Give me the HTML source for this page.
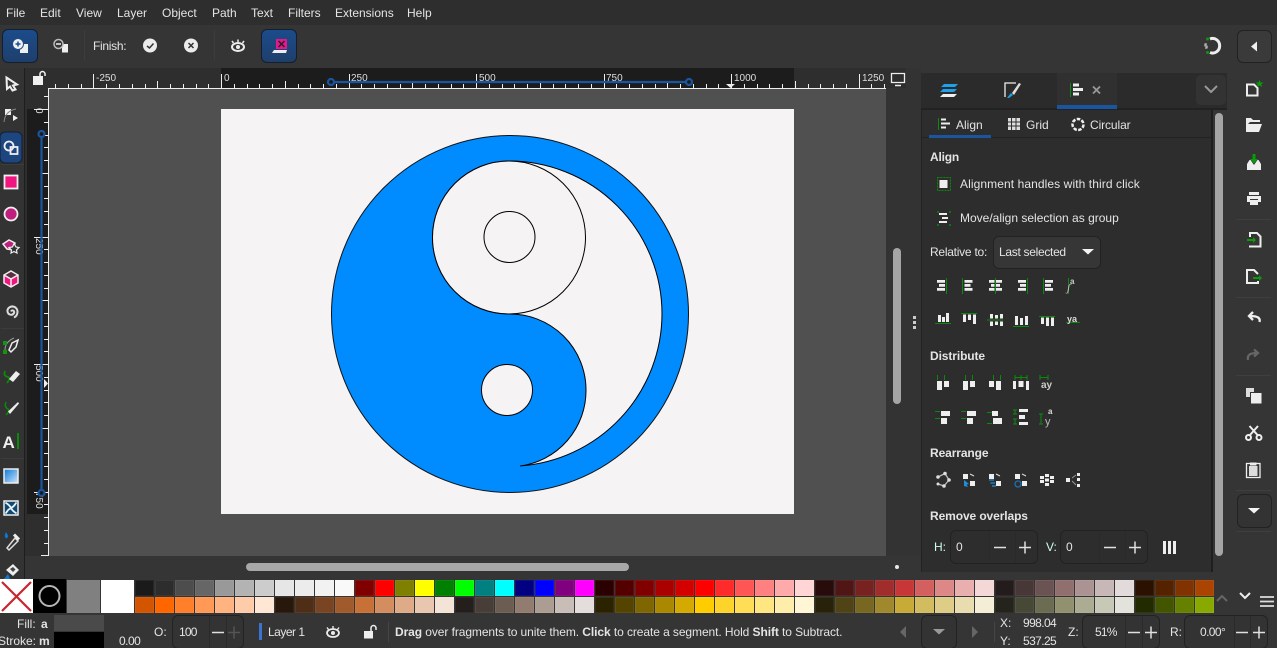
<!DOCTYPE html>
<html><head><meta charset="utf-8"><style>
html,body{margin:0;padding:0;width:1277px;height:648px;overflow:hidden;background:#353535}
body{position:relative;font:12px/14px "Liberation Sans",sans-serif;color:#e4e4e4}
.b{position:absolute}
.t{position:absolute;white-space:nowrap;line-height:14px}
.h{font-weight:bold}
.box{position:absolute;border:1px solid #222;border-radius:6px;box-sizing:border-box;background:#333}
.blue{position:absolute;box-sizing:border-box;border:1px solid #141e2c;border-radius:6px;background:linear-gradient(#1c4c8c,#1e3f6c)}
.r{font-size:10px;color:#ddd;line-height:10px}
.v{font-size:10px;line-height:10px;color:#ddd;writing-mode:vertical-rl;position:absolute;white-space:nowrap}
.p{position:absolute;left:135px;height:16px;display:flex;gap:1px}
.p i{display:block;width:19px;height:16px;box-shadow:inset 0 0 0 1px rgba(255,255,255,.06)}
svg{position:absolute;left:0;top:0}
</style></head><body>
<div class="b" style="left:0;top:0;width:1277px;height:25px;background:#2e2e2e"></div>
<div class="b" style="left:0;top:25px;width:1277px;height:43px;background:#353535"></div>
<span class="t" style="left:6px;top:6px">File</span>
<span class="t" style="left:40px;top:6px">Edit</span>
<span class="t" style="left:76px;top:6px">View</span>
<span class="t" style="left:117px;top:6px">Layer</span>
<span class="t" style="left:162px;top:6px">Object</span>
<span class="t" style="left:212px;top:6px">Path</span>
<span class="t" style="left:251px;top:6px">Text</span>
<span class="t" style="left:288px;top:6px">Filters</span>
<span class="t" style="left:335px;top:6px">Extensions</span>
<span class="t" style="left:407px;top:6px">Help</span>
<div class="blue" style="left:2px;top:29px;width:36px;height:34px"></div>
<div class="blue" style="left:261px;top:29px;width:36px;height:34px"></div>
<span class="t" style="left:93px;top:39px;letter-spacing:-.3px">Finish:</span>
<div class="box" style="left:1237px;top:30px;width:35px;height:33px;background:#3a3a3a"></div>

<div class="b" style="left:0;top:68px;width:24px;height:512px;background:#333"></div>
<div class="b" style="left:24px;top:68px;width:1px;height:512px;background:#1e1e1e"></div>
<div class="b" style="left:25px;top:68px;width:24px;height:490px;background:#2e2e2e"></div>
<div class="b" style="left:27px;top:109px;width:21px;height:405px;background:#1c1c1c"></div>
<div class="b" style="left:49px;top:68px;width:837px;height:20px;background:#2e2e2e"></div>
<div class="b" style="left:221px;top:68px;width:573px;height:20px;background:#1c1c1c"></div>
<div class="b" style="left:49px;top:89px;width:837px;height:467px;background:#505050"></div>
<div class="b" style="left:221px;top:109px;width:573px;height:405px;background:#f5f3f4"></div>
<div class="b" style="left:886px;top:68px;width:35px;height:512px;background:#333"></div>
<div class="b" style="left:886px;top:68px;width:20px;height:20px;background:#2e2e2e"></div>
<div class="b" style="left:25px;top:556px;width:896px;height:23px;background:#353535"></div>
<div class="b" style="left:893px;top:248px;width:8px;height:156px;border-radius:4px;background:#a5a5a5"></div>
<div class="b" style="left:246px;top:563px;width:383px;height:8px;border-radius:4px;background:#a8a8a8"></div>
<div class="b" style="left:895px;top:565px;width:4px;height:4px;border-radius:2px;background:#e8e8e8"></div>
<div class="b" style="left:913px;top:316px;width:3px;height:3px;background:#ccc"></div>
<div class="b" style="left:913px;top:321px;width:3px;height:3px;background:#ccc"></div>
<div class="b" style="left:913px;top:326px;width:3px;height:3px;background:#ccc"></div>

<span class="t r" style="left:96px;top:74px">-250</span>
<span class="t r" style="left:224px;top:74px">0</span>
<span class="t r" style="left:351px;top:74px">250</span>
<span class="t r" style="left:479px;top:74px">500</span>
<span class="t r" style="left:606px;top:74px">750</span>
<span class="t r" style="left:734px;top:74px">1000</span>
<span class="t r" style="left:862px;top:74px">1250</span>
<span class="v" style="left:33px;top:108px">0</span>
<span class="v" style="left:33px;top:238px">250</span>
<span class="v" style="left:33px;top:365px">500</span>
<span class="v" style="left:33px;top:492px">750</span>

<!-- panel -->
<div class="b" style="left:921px;top:73px;width:306px;height:37px;background:#2b2b2b"></div>
<div class="b" style="left:1057px;top:73px;width:60px;height:36px;background:#303030"></div>
<div class="b" style="left:1057px;top:105px;width:60px;height:4px;background:#1a559f"></div>
<div class="b" style="left:921px;top:108px;width:306px;height:2px;background:#222"></div>
<div class="b" style="left:1057px;top:105px;width:60px;height:4px;background:#1a559f"></div>
<div class="b" style="left:1196px;top:75px;width:30px;height:30px;border-radius:5px;background:#333"></div>
<div class="b" style="left:921px;top:110px;width:290px;height:462px;background:#2d2d2d"></div>
<div class="b" style="left:921px;top:110px;width:1px;height:462px;background:#222"></div>
<div class="b" style="left:1211px;top:110px;width:2px;height:462px;background:#1f1f1f"></div>
<div class="b" style="left:922px;top:137px;width:289px;height:1px;background:#222"></div>
<div class="b" style="left:929px;top:135px;width:62px;height:3px;background:#1a559f"></div>
<div class="b" style="left:1215px;top:113px;width:8px;height:443px;border-radius:4px;background:#a5a5a5"></div>
<span class="t" style="left:956px;top:118px">Align</span>
<span class="t" style="left:1026px;top:118px">Grid</span>
<span class="t" style="left:1090px;top:118px;letter-spacing:-.1px">Circular</span>
<span class="t h" style="left:930px;top:150px;letter-spacing:-.2px">Align</span>
<span class="t" style="left:960px;top:177px;letter-spacing:.09px">Alignment handles with third click</span>
<span class="t" style="left:960px;top:211px">Move/align selection as group</span>
<span class="t" style="left:930px;top:245px;letter-spacing:-.25px">Relative to:</span>
<div class="box" style="left:993px;top:236px;width:108px;height:33px;background:#363636"></div>
<span class="t" style="left:999px;top:245px;letter-spacing:-.3px">Last selected</span>
<span class="t h" style="left:930px;top:349px;letter-spacing:-.1px">Distribute</span>
<span class="t h" style="left:930px;top:446px;letter-spacing:-.1px">Rearrange</span>
<span class="t h" style="left:930px;top:509px;letter-spacing:-.1px">Remove overlaps</span>
<span class="t" style="left:934px;top:540px;color:#cfe">H:</span>
<div class="box" style="left:950px;top:530px;width:88px;height:34px;background:#2d2d2d"></div>
<span class="t" style="left:956px;top:540px">0</span>
<span class="t" style="left:1046px;top:540px;color:#cfe">V:</span>
<div class="box" style="left:1060px;top:530px;width:88px;height:34px;background:#2d2d2d"></div>
<span class="t" style="left:1066px;top:540px">0</span>

<!-- palette -->
<div class="b" style="left:0;top:579px;width:33px;height:34px;background:#fff"></div>
<div class="b" style="left:33px;top:579px;width:33px;height:34px;background:#000"></div>
<div class="b" style="left:67px;top:580px;width:33px;height:33px;background:#808080"></div>
<div class="b" style="left:101px;top:580px;width:33px;height:33px;background:#fff"></div>
<div class="p" style="top:580px">
<i style="background:#1a1a1a"></i><i style="background:#2d2d2d"></i><i style="background:#4d4d4d"></i><i style="background:#666"></i><i style="background:#999"></i><i style="background:#b3b3b3"></i><i style="background:#ccc"></i><i style="background:#e6e6e6"></i><i style="background:#ececec"></i><i style="background:#f2f2f2"></i><i style="background:#f9f9f9"></i>
<i style="background:#800000"></i><i style="background:#f00"></i><i style="background:#808000"></i><i style="background:#ff0"></i><i style="background:#008000"></i><i style="background:#0f0"></i><i style="background:#008080"></i><i style="background:#0ff"></i><i style="background:#000080"></i><i style="background:#00f"></i><i style="background:#800080"></i><i style="background:#f0f"></i>
<i style="background:#2b0000"></i><i style="background:#500"></i><i style="background:#800000"></i><i style="background:#a00"></i><i style="background:#d40000"></i><i style="background:#f00"></i><i style="background:#ff2a2a"></i><i style="background:#f55"></i><i style="background:#ff8080"></i><i style="background:#faa"></i><i style="background:#ffd5d5"></i>
<i style="background:#280b0b"></i><i style="background:#501616"></i><i style="background:#782121"></i><i style="background:#a02c2c"></i><i style="background:#c83737"></i><i style="background:#d35f5f"></i><i style="background:#de8787"></i><i style="background:#e9afaf"></i><i style="background:#f4d7d7"></i>
<i style="background:#241c1c"></i><i style="background:#483737"></i><i style="background:#6c5353"></i><i style="background:#916f6f"></i><i style="background:#ac9393"></i><i style="background:#c8b7b7"></i><i style="background:#e3dbdb"></i>
<i style="background:#2b1100"></i><i style="background:#520"></i><i style="background:#803300"></i><i style="background:#a40"></i>
</div>
<div class="p" style="top:597px">
<i style="background:#d45500"></i><i style="background:#f60"></i><i style="background:#ff7f2a"></i><i style="background:#f95"></i><i style="background:#ffb380"></i><i style="background:#fca"></i><i style="background:#ffe6d5"></i>
<i style="background:#28170b"></i><i style="background:#502d16"></i><i style="background:#784421"></i><i style="background:#a05a2c"></i><i style="background:#c87137"></i><i style="background:#d38d5f"></i><i style="background:#deaa87"></i><i style="background:#e9c6af"></i><i style="background:#f4e3d7"></i>
<i style="background:#241f1c"></i><i style="background:#483e37"></i><i style="background:#6c5d53"></i><i style="background:#917c6f"></i><i style="background:#ac9d93"></i><i style="background:#c8beb7"></i><i style="background:#e3dedb"></i>
<i style="background:#2b2200"></i><i style="background:#540"></i><i style="background:#806600"></i><i style="background:#a80"></i><i style="background:#d4aa00"></i><i style="background:#fc0"></i><i style="background:#ffd42a"></i><i style="background:#fd5"></i><i style="background:#ffe680"></i><i style="background:#fea"></i><i style="background:#fff6d5"></i>
<i style="background:#28220b"></i><i style="background:#504416"></i><i style="background:#786721"></i><i style="background:#a0892c"></i><i style="background:#c8ab37"></i><i style="background:#d3bc5f"></i><i style="background:#decd87"></i><i style="background:#e9ddaf"></i><i style="background:#f4eed7"></i>
<i style="background:#24241c"></i><i style="background:#484837"></i><i style="background:#6c6c53"></i><i style="background:#91916f"></i><i style="background:#acac93"></i><i style="background:#c8c8b7"></i><i style="background:#e3e3db"></i>
<i style="background:#222b00"></i><i style="background:#450"></i><i style="background:#668000"></i><i style="background:#8a0"></i>
</div>

<!-- status -->
<span class="t" style="left:17px;top:617px">Fill:</span>
<span class="t h" style="left:41px;top:617px">a</span>
<span class="t" style="left:-2px;top:634px">Stroke:</span>
<span class="t h" style="left:39px;top:634px">m</span>
<div class="b" style="left:54px;top:615px;width:50px;height:16px;background:#4a4a4a"></div>
<div class="b" style="left:54px;top:632px;width:50px;height:16px;background:#000"></div>
<span class="t" style="left:119px;top:634px;letter-spacing:-.5px">0.00</span>
<span class="t" style="left:154px;top:625px">O:</span>
<div class="box" style="left:172px;top:615px;width:72px;height:34px"></div>
<span class="t" style="left:179px;top:625px;letter-spacing:-.8px">100</span>
<div class="b" style="left:259px;top:623px;width:3px;height:17px;background:#3a74cf"></div>
<span class="t" style="left:268px;top:625px;letter-spacing:-.5px">Layer 1</span>
<span class="t" style="left:395px;top:625px;white-space:pre;letter-spacing:-.08px"><b>Drag</b> over fragments to unite them. <b>Click</b> to create a segment. Hold <b>Shift</b> to Subtract.</span>
<div class="box" style="left:921px;top:615px;width:36px;height:34px"></div>
<span class="t" style="left:1000px;top:616px">X:</span>
<span class="t" style="left:1000px;top:634px">Y:</span>
<span class="t" style="left:1023px;top:616px;letter-spacing:-.6px">998.04</span>
<span class="t" style="left:1023px;top:634px;letter-spacing:-.6px">537.25</span>
<span class="t" style="left:1068px;top:625px">Z:</span>
<div class="box" style="left:1082px;top:615px;width:78px;height:34px"></div>
<span class="t" style="left:1095px;top:625px;letter-spacing:-.8px">51%</span>
<span class="t" style="left:1170px;top:625px">R:</span>
<div class="box" style="left:1184px;top:615px;width:84px;height:34px"></div>
<span class="t" style="left:1200px;top:625px;letter-spacing:-.6px">0.00°</span>
<div class="b" style="left:1227px;top:68px;width:50px;height:512px;background:#353535"></div>
<div class="box" style="left:1237px;top:494px;width:35px;height:34px;background:#333"></div>

<svg width="1277" height="648" viewBox="0 0 1277 648">
<!-- artwork -->
<circle cx="510" cy="314" r="178.500" fill="#008cff" stroke="#111" stroke-width="1"/>
<path d="M509 161A153 153 0 0 1 662 314A153 153 0 0 1 520 466A76 76 0 0 0 586 390A76 76 0 0 0 509 314A76.500 76.500 0 0 1 509 161Z" fill="#f5f3f4" stroke="#000" stroke-width="1"/>
<circle cx="509" cy="237.500" r="76.500" fill="#f5f3f4" stroke="#000" stroke-width="1"/>
<circle cx="509.500" cy="237" r="25.500" fill="#f5f3f4" stroke="#000" stroke-width="1"/>
<circle cx="507" cy="390" r="25.500" fill="#f5f3f4" stroke="#000" stroke-width="1"/>

<!-- rulers -->
<g stroke="#eee" stroke-width="1" fill="none" shape-rendering="crispEdges">
<path d="M49 88.500H886M48.500 88V556"/>
<path d="M93.500 74V88M221.500 74V88M349.500 74V88M476.500 74V88M604.500 74V88M731.500 74V88M859.500 74V88"/>
<path d="M157.500 81V88M285.500 81V88M412.500 81V88M540.500 81V88M667.500 81V88M795.500 81V88"/>
<path d="M55.500 84V88M68.500 84V88M81.500 84V88M106.500 84V88M119.500 84V88M132.500 84V88M145.500 84V88M170.500 84V88M183.500 84V88M196.500 84V88M208.500 84V88M234.500 84V88M247.500 84V88M259.500 84V88M272.500 84V88M298.500 84V88M310.500 84V88M323.500 84V88M336.500 84V88M361.500 84V88M374.500 84V88M387.500 84V88M400.500 84V88M425.500 84V88M438.500 84V88M451.500 84V88M463.500 84V88M489.500 84V88M502.500 84V88M514.500 84V88M527.500 84V88M553.500 84V88M565.500 84V88M578.500 84V88M591.500 84V88M616.500 84V88M629.500 84V88M642.500 84V88M655.500 84V88M680.500 84V88M693.500 84V88M706.500 84V88M718.500 84V88M744.500 84V88M757.500 84V88M769.500 84V88M782.500 84V88M808.500 84V88M820.500 84V88M833.500 84V88M846.500 84V88M871.500 84V88M884.500 84V88"/>
<path d="M34 109.500H48M34 237.500H48M34 364.500H48M34 492.500H48"/>
<path d="M41 173.500H48M41 300.500H48M41 428.500H48M41 555.500H48"/>
<path d="M44 96.500H48M44 122.500H48M44 135.500H48M44 147.500H48M44 160.500H48M44 186.500H48M44 198.500H48M44 211.500H48M44 224.500H48M44 249.500H48M44 262.500H48M44 275.500H48M44 288.500H48M44 313.500H48M44 326.500H48M44 339.500H48M44 351.500H48M44 377.500H48M44 390.500H48M44 402.500H48M44 415.500H48M44 441.500H48M44 453.500H48M44 466.500H48M44 479.500H48M44 504.500H48M44 517.500H48M44 530.500H48M44 543.500H48"/>
</g>
<g stroke="#1a559f" fill="none">
<path d="M331 82H689M41.500 135V493" stroke-width="2.200"/>
<circle cx="331" cy="82" r="3" stroke-width="2.200" fill="#1c1c1c"/>
<circle cx="689" cy="82" r="3" stroke-width="2.200" fill="#1c1c1c"/>
<circle cx="41.500" cy="134" r="3" stroke-width="2.200" fill="#1c1c1c"/>
<circle cx="41.500" cy="493" r="3" stroke-width="2.200" fill="#1c1c1c"/>
</g>
<path d="M726 84H735L730.500 88ZM44 379V388L48 383.500Z" fill="#eee"/>
<!-- lock on ruler -->
<rect x="33" y="76" width="10" height="9" fill="#f0f0f0"/>
<path d="M40 76V74A2.500 2.500 0 0 1 45 74V76" fill="none" stroke="#f0f0f0" stroke-width="1.500"/>
<!-- display icon -->
<path d="M891.500 73.500H904.500V82.500H891.500Z" fill="none" stroke="#eee" stroke-width="1.300"/><path d="M895 85.500H901" stroke="#eee" stroke-width="1.500"/>

<!-- top toolbar icons -->
<rect x="20" y="44" width="8" height="9" fill="#f0f0f0"/><circle cx="18" cy="44" r="5.500" fill="#f0f0f0" stroke="#1c4c8c" stroke-width="1"/><path d="M15.500 44H20.500M18 41.500V46.500" stroke="#1c4c8c" stroke-width="1.500"/>
<rect x="62" y="44" width="6" height="8.500" fill="#f0f0f0"/><circle cx="58.500" cy="44" r="4.500" fill="#353535" stroke="#bbb" stroke-width="1.500"/><path d="M56 44H61" stroke="#eee" stroke-width="1.500"/>
<circle cx="150" cy="45.500" r="7" fill="#ececec"/><path d="M147 46L149.500 48L153.500 43.500" fill="none" stroke="#333" stroke-width="1.500"/>
<circle cx="191" cy="45.500" r="7" fill="#ececec"/><path d="M188.500 43L193.500 48M193.500 43L188.500 48" stroke="#333" stroke-width="1.500"/>
<path d="M84.500 30V60M214.500 30V60" stroke="#3d3d3d"/>
<g fill="none" stroke="#ececec"><ellipse cx="238" cy="47" rx="6" ry="4" stroke-width="2"/><path d="M232 41L233.500 43M238 39.500V42M244 41L242.500 43" stroke-width="1.500"/></g><circle cx="238" cy="47" r="2" fill="#ececec"/>
<rect x="276" y="39" width="11" height="10" fill="#e9158c"/><path d="M278.500 41L284.500 47M284.500 41L278.500 47" stroke="#222" stroke-width="1.500"/><path d="M274 50H287L286 53H272Z" fill="#eee"/>
<path d="M1210 39A7 7.300 0 1 1 1210 52.500" fill="none" stroke="#eee" stroke-width="3"/><circle cx="1207.500" cy="39" r="1.500" fill="#0a9a0a"/><circle cx="1207.500" cy="52.500" r="1.500" fill="#0a9a0a"/><path d="M1207 44H1205V46H1207V48H1205" fill="none" stroke="#ddd" stroke-width="1"/>
<path d="M1257 41.500V51.500L1251 46.500Z" fill="#f0f0f0"/>

<!-- left toolbar -->
<rect x="0" y="132" width="22" height="31" rx="5" fill="#1d4680" stroke="#141e2c"/>
<path d="M6.500 77.500L17 84.500L13 85.500L15.500 89.500L12.500 90.500L10 86.500L7 89Z" fill="#333" stroke="#eee" stroke-width="2"/>
<rect x="5" y="109" width="6" height="6" fill="#eee"/><path d="M4 122Q5 111 16 109" fill="none" stroke="#888"/><path d="M13 115V121L18 118Z" fill="#eee"/>
<circle cx="9" cy="146" r="4.500" fill="none" stroke="#eee" stroke-width="1.800"/><rect x="10.500" y="147" width="7" height="7" fill="none" stroke="#eee" stroke-width="1.800"/>
<rect x="4.500" y="175.500" width="13" height="13" fill="#f0157f" stroke="#f0f0f0" stroke-width="1.800"/>
<circle cx="11" cy="214" r="6.500" fill="#c01f7d" stroke="#f0f0f0" stroke-width="1.800"/>
<path d="M3 244L9 240L15 243L13.500 250L7 249Z" fill="#c01f7d" stroke="#eee" stroke-width="1.500"/><path d="M14 243.500L16 247L19 247.500L16.500 250L17 253L14 251.500L11 253L11.500 250L9 247.500L12.500 247Z" fill="#333" stroke="#eee" stroke-width="1.200"/>
<path d="M11 271L18 275V283L11 287L4 283V275Z" fill="#f0157f"/><path d="M11 271L18 275L11 279L4 275Z" fill="#5a3040"/><path d="M11 271L18 275V283L11 287L4 283V275ZM4 275L11 279L18 275M11 279V287" fill="none" stroke="#f0f0f0" stroke-width="1.500"/>
<path d="M11 311.500C12 309 15 311 14 313C12.500 316 8 315 7.500 311.500C7 307.500 12 305 15.500 307.500C19 310.500 17.500 316 14 317.500" fill="none" stroke="#ddd" stroke-width="2"/>
<path d="M5 350Q5 342 14 338" fill="none" stroke="#999"/><path d="M9 350L12 343L18 340L16 347L11 352Z" fill="none" stroke="#eee" stroke-width="1.500"/><rect x="3" y="341" width="4" height="4" fill="#0a9a0a"/><rect x="3" y="350" width="4" height="4" fill="#0a9a0a"/>
<path d="M5 371Q3 376 8 377Q11 378 7 383" fill="none" stroke="#0a8a0a" stroke-width="1.800"/><path d="M9 379L16 371L20 374L13 382Z" fill="#eee"/>
<path d="M6 402Q4 407 8 409Q10 411 6 415" fill="none" stroke="#0a8a0a" stroke-width="1.500"/><path d="M8 411.500L18 402L19 403.500L10 414Z" fill="#eee"/>
<text x="2.500" y="448" font-family="Liberation Sans" font-weight="bold" font-size="17" fill="#eee">A</text><rect x="17" y="433" width="2" height="16" fill="#0a8a0a"/>
<defs><linearGradient id="g1" x1="0" y1="0" x2="1" y2="1"><stop offset="0" stop-color="#0a78d8"/><stop offset="1" stop-color="#cfe6fa"/></linearGradient></defs>
<rect x="4" y="469" width="14" height="14" fill="url(#g1)" stroke="#eee" stroke-width="1.500"/>
<rect x="4" y="501" width="14" height="14" fill="#12486e" stroke="#eee" stroke-width="1.500"/><path d="M11 508C9 504 7 504 5.500 502.500M11 508C15 506 15 504 16.500 502.500M11 508C13 512 15 512 16.500 513.500M11 508C7 510 7 512 5.500 513.500" fill="none" stroke="#e4f2fb" stroke-width="1.800"/>
<path d="M6 532C8 535 9 537 6.500 538.500C4 537 4.500 535 6 532Z" fill="#0a78d8"/><path d="M7 548L15 538L18 541L9 550Z" fill="none" stroke="#ddd" stroke-width="1.500"/><path d="M14 534.500L19 539.500" stroke="#eee" stroke-width="3"/>
<path d="M6 570L13 564L19 570L13 576Z" fill="#eee"/><path d="M10 569L13 567L15.500 569.500L13 572Z" fill="#444"/><path d="M4 579L8 574L10 579Z" fill="#0a78d8"/>
<path d="M1 458.500H24M1 164.500H24M1 328.500H24" stroke="#3c3c3c"/>

<!-- right toolbar -->
<g fill="none" stroke="#eee" stroke-width="2">
<path d="M1247 84.500H1254L1257.500 88V95.500H1247Z"/>
<path d="M1250 245.500V246.500H1260.500V236.500L1257 233H1250V237"/>
<path d="M1258 274L1254 270H1247V283H1258V281"/>
<path d="M1259.500 322C1260.500 318 1258 316 1250 316M1253 312L1249 316L1253 320" stroke-width="2.300"/>
<path d="M1248 360C1247 355 1250 353 1257 353M1254 349.500L1258 353L1254 356.500" stroke="#666" stroke-width="2.300"/>
<circle cx="1248.500" cy="437.500" r="2.500"/><circle cx="1259" cy="437.500" r="2.500"/>
<path d="M1250 435L1258 426M1257.500 435L1249.500 426"/>
</g>
<rect x="1246.500" y="463.500" width="13.500" height="14" fill="none" stroke="#eee" stroke-width="1.300"/>
<path d="M1259.500 80L1260.600 82.500L1263.500 82.500L1261.300 84.300L1262.200 87L1259.500 85.500L1256.800 87L1257.700 84.300L1255.500 82.500L1258.400 82.500Z" fill="#0a9a0a"/>
<path d="M1246 132V118H1251L1253 120H1260V122H1250L1248 124H1250L1246 132Z" fill="#eee"/><path d="M1249 124H1262L1259 132H1246Z" fill="#eee"/>
<path d="M1252.500 154H1255.500V159H1258L1254 163.500L1250 159H1252.500Z" fill="#0a9a0a"/><path d="M1249.500 160H1250.500L1254 165L1257.500 160H1258.500L1261 164V170H1247V164Z" fill="#eee"/>
<path d="M1249 192H1259V195H1249ZM1247 196H1261V202H1258V199H1250V202H1247ZM1250 200H1258V205H1250Z" fill="#eee"/>
<path d="M1247 239H1253V237L1256 240L1253 243V241H1247Z" fill="#0a9a0a"/>
<path d="M1253 277H1259V275L1262 278L1259 281V279H1253Z" fill="#0a9a0a"/>
<rect x="1246" y="388" width="8" height="9" fill="#ddd"/><rect x="1250.500" y="392.500" width="11.500" height="11.500" fill="#eee" stroke="#353535"/>
<rect x="1249" y="466" width="8.500" height="10" fill="#ddd"/><rect x="1250" y="462.500" width="6.500" height="3" fill="#eee"/>
<path d="M1248 508H1260L1254 513.500Z" fill="#f4f4f4"/>
<path d="M1236 219.500H1271M1236 297.500H1271M1236 375.500H1271M1236 490.500H1271M1236 531.500H1271" stroke="#3f3f3f"/>

<!-- panel tabs -->
<path d="M944 84H958L955 87H941ZM943 89H957L954 92H940Z" fill="#1ea0ea"/><path d="M943 94H957L954 97H940Z" fill="#eee"/>
<path d="M1016 83H1005V97" fill="none" stroke="#eee" stroke-width="1.300"/><path d="M1012 93L1019 83L1021 84L1014 95Z" fill="#ddd"/><path d="M1007 98L1011 93L1013 95L1009 98Z" fill="#1ea0ea"/>
<path d="M1070.500 83V97" stroke="#0a8a0a"/><path d="M1073 83.500H1079V86.500H1073ZM1073 88H1083V91H1073ZM1073 92.500H1079V95.500H1073Z" fill="#eee"/>
<path d="M1093 86.500L1100 93.500M1100 86.500L1093 93.500" stroke="#999" stroke-width="1.800"/>
<path d="M1205 86L1211 92L1217 86" fill="none" stroke="#999" stroke-width="2"/>
<!-- subtab icons -->
<path d="M938.500 118V130" stroke="#0a8a0a"/><path d="M941 118.500H946V120.500H941ZM941 122.500H950V124.500H941ZM941 126.500H946V128.500H941Z" fill="#eee"/>
<path d="M1008 118H1020V130H1008Z" fill="#ddd"/><path d="M1011.500 118V130M1016 118V130M1008 122H1020M1008 126H1020" stroke="#2d2d2d"/>
<circle cx="1078" cy="124.500" r="5.500" fill="none" stroke="#eee" stroke-width="2.500" stroke-dasharray="3.500 1.400"/>
<!-- align checks -->
<rect x="937.500" y="177.500" width="13" height="13" fill="none" stroke="#0a8a0a" stroke-dasharray="2 1"/><rect x="939.500" y="180" width="8" height="8" fill="#eee"/>
<path d="M937 212H939M949 212H951M937 225H939M949 225H951" stroke="#0a8a0a" stroke-width="1.500"/><path d="M939 213H947V215H939ZM942 217H948V219H942ZM939 221H947V223H939Z" fill="#eee"/>
<path d="M1082 249H1094L1088 254.500Z" fill="#f4f4f4"/>

<!-- align row 1 -->
<g fill="#eee">
<path d="M937 280H945V282.800H937ZM939 284H945V286.800H939ZM937 288H945V290.800H937Z"/>
<path d="M964.500 280H972.500V282.800H964.500ZM964.500 284H970.500V286.800H964.500ZM964.500 288H972.500V290.800H964.500Z"/>
<path d="M989 280H994.500V282.800H989ZM996 280H1002V282.800H996ZM991 284H994.500V286.800H991ZM996 284H1000V286.800H996ZM989 288H994.500V290.800H989ZM996 288H1002V290.800H996Z"/>
<path d="M1018 280H1026V282.800H1018ZM1020 284H1026V286.800H1020ZM1018 288H1026V290.800H1018Z"/>
<path d="M1045 280H1053V282.800H1045ZM1045 284H1051V286.800H1045ZM1045 288H1053V290.800H1045Z"/>
<!-- row 2 -->
<path d="M938 315H941V322H938ZM942 317H945V322H942ZM946 313H949V322H946Z"/>
<path d="M963 314.500H966V322H963ZM968 314.500H971V320H968ZM973 314.500H976V324H973Z"/>
<path d="M990 314H993V318.500H990ZM995 315H998V318.500H995ZM1000 314H1003V318.500H1000ZM990 321.500H993V326H990ZM995 321.500H998V325H995ZM1000 321.500H1003V326H1000Z"/>
<path d="M1015 316H1018V325H1015ZM1020 318H1023V325H1020ZM1025 316H1028V325H1025Z"/>
<path d="M1041 317.500H1044V324H1041ZM1046 317.500H1049V326H1046ZM1051 317.500H1054V326H1051Z"/>
<!-- distribute 1 -->
<path d="M937 381H942V390H937ZM944 381H949V387H944Z"/>
<path d="M963 381H968V390H963ZM970 381H975V387H970Z"/>
<path d="M989 381H994V387H989ZM996 381H1001V390H996Z"/>
<path d="M1013 381H1016V389H1013ZM1018.500 381H1023.500V387H1018.500ZM1026 381H1029V390H1026Z"/>
<!-- distribute 2 -->
<path d="M941 411H950V416H941ZM941 418H947V424H941Z"/>
<path d="M967 411H976V416H967ZM967 418H973V424H967Z"/>
<path d="M992 411H998V416H992ZM993 418H1002V424H993Z"/>
<path d="M1019 409H1028V412H1019ZM1019 415H1025V419H1019ZM1019 422H1028V425H1019Z"/>
<!-- rearrange -->
<path d="M963 474H968V479H963ZM970 481H975V486H970ZM989 474H994V479H989ZM996 481H1001V486H996ZM1015 474H1020V479H1015ZM1022 481H1027V486H1022Z"/>
<path d="M1040 476H1044V479H1040ZM1045 474H1049V477H1045ZM1050 476H1054V479H1050ZM1040 480H1044V483H1040ZM1045 478.500H1049V481.500H1045ZM1050 480H1054V483H1050ZM1045 483H1049V486H1045Z"/>
<path d="M1066 478H1070V482H1066ZM1077 473H1080V476H1077ZM1077 478H1080V481H1077ZM1077 484H1080V487H1077Z"/>
<rect x="1163" y="541" width="3" height="13"/><rect x="1168" y="541" width="3" height="13"/><rect x="1173" y="541" width="3" height="13"/>
</g>
<path d="M946.500 278V294M962.500 278V294M995.500 278V294M1027.500 278V294M1043.500 278V294M1068.500 278V294" stroke="#0a8a0a"/>
<path d="M935 323.500H951M961 313.500H977M987 320H1003M1013 326.500H1029M1039 316.500H1055M1066 322.500H1080" stroke="#0a8a0a"/>
<path d="M937.500 375V380M944.500 375V380M965.500 375V380M972.500 375V380M993.500 375V380M1000.500 375V380M1015 377.500H1027M1040 377.500H1048M1015 375V380M1021 375V380M1027 375V380M1040 375V380M1048 375V380" stroke="#0a8a0a"/>
<path d="M935 411.500H940M935 418.500H940M961 411.500H966M961 418.500H966M987 412.500H992M987 423.500H992M1015 410V414M1015 419V424M1013 410H1017M1013 414H1017M1013 419H1017M1013 424H1017M1041 414V424M1039 414H1043M1039 424H1043" stroke="#0a8a0a"/>
<text x="1067" y="291" font-family="Liberation Serif" font-size="11" font-style="italic" fill="#ccc">ʃ</text>
<text x="1070" y="284" font-family="Liberation Sans" font-size="8" font-weight="bold" fill="#ccc">a</text>
<text x="1067" y="322" font-family="Liberation Sans" font-size="9" font-weight="bold" fill="#ddd">ya</text>
<text x="1041" y="388" font-family="Liberation Sans" font-size="10" font-weight="bold" fill="#ccc">ay</text>
<text x="1048" y="414" font-family="Liberation Sans" font-size="8" font-weight="bold" fill="#ddd">a</text>
<text x="1045" y="425" font-family="Liberation Sans" font-size="11" fill="#bbb">y</text>
<!-- rearrange graph + colored -->
<path d="M938 477L945 473.500L949 480L944 486L938 484" fill="none" stroke="#bbb" stroke-width="1.300"/>
<g fill="#ddd"><circle cx="938" cy="477" r="1.800"/><circle cx="945" cy="473.500" r="1.800"/><circle cx="949" cy="480" r="1.800"/><circle cx="944" cy="486" r="1.800"/><circle cx="938" cy="484" r="1.500"/></g>
<path d="M964 480L969 484L966.500 484.500L968 487L964 486Z" fill="#1e90e0"/>
<path d="M989 480H994M990.500 483H995M992 486H996" stroke="#1e90e0" stroke-width="1.300"/>
<circle cx="1018" cy="484" r="3" fill="none" stroke="#1a70b0" stroke-width="1.300"/>
<path d="M970 474L974 476M996 474L1000 476M1022 474L1026 476" stroke="#ddd"/>
<path d="M1072 478L1076 475M1072 481L1076 485" stroke="#999"/>
<!-- spin buttons -->
<g stroke="#e0e0e0" stroke-width="1.500" fill="none">
<path d="M994 547.500H1006M1019 547.500H1031M1025 541.500V553.500"/>
<path d="M1104 547.500H1116M1129 547.500H1141M1135 541.500V553.500"/>
<path d="M212 632.500H224"/>
<path d="M1128 632.500H1140M1145 632.500H1157M1151 626.500V638.500"/>
<path d="M1236 632.500H1248M1253 632.500H1265M1259 626.500V638.500"/>
<path d="M228 632.500H240M234 626.500V638.500" stroke="#555"/>
</g>
<path d="M989.500 531V563M1015.500 531V563M1099.500 531V563M1125.500 531V563M209.500 616V648M226.500 616V648M1125.500 616V648M1142.500 616V648M1234.500 616V648M1250.500 616V648" stroke="#2a2a2a"/>
<!-- palette extras -->
<path d="M2 582L31 611M31 582L2 611" stroke="#c8252f" stroke-width="2.200"/>
<circle cx="49.500" cy="596" r="10" fill="none" stroke="#b5b5b5" stroke-width="2"/>
<path d="M1217 601L1222 596L1227 601" fill="none" stroke="#666" stroke-width="2"/>
<path d="M1240 593L1245 598L1250 593" fill="none" stroke="#eee" stroke-width="2"/>
<path d="M1260 597H1274M1260 601.500H1274M1260 606H1274" stroke="#ddd" stroke-width="1.700"/>
<!-- status icons -->
<g fill="none" stroke="#ececec"><ellipse cx="333" cy="633" rx="6" ry="4" stroke-width="1.800"/><path d="M327 627.500L328.500 629.500M333 626V628.500M339 627.500L337.500 629.500" stroke-width="1.400"/></g><circle cx="333" cy="633" r="2" fill="#ececec"/>
<rect x="364" y="631" width="9" height="7.500" fill="#eee"/><path d="M371 631V628A2.500 2.500 0 0 1 376 628V630" fill="none" stroke="#eee" stroke-width="1.500"/>
<path d="M388.500 622V642M994.500 622V642" stroke="#454545"/>
<path d="M906 626V638L900 632Z" fill="#666"/><path d="M972 626V638L978 632Z" fill="#666"/><path d="M933 629H945L939 634.500Z" fill="#999"/>
</svg>
</body></html>
